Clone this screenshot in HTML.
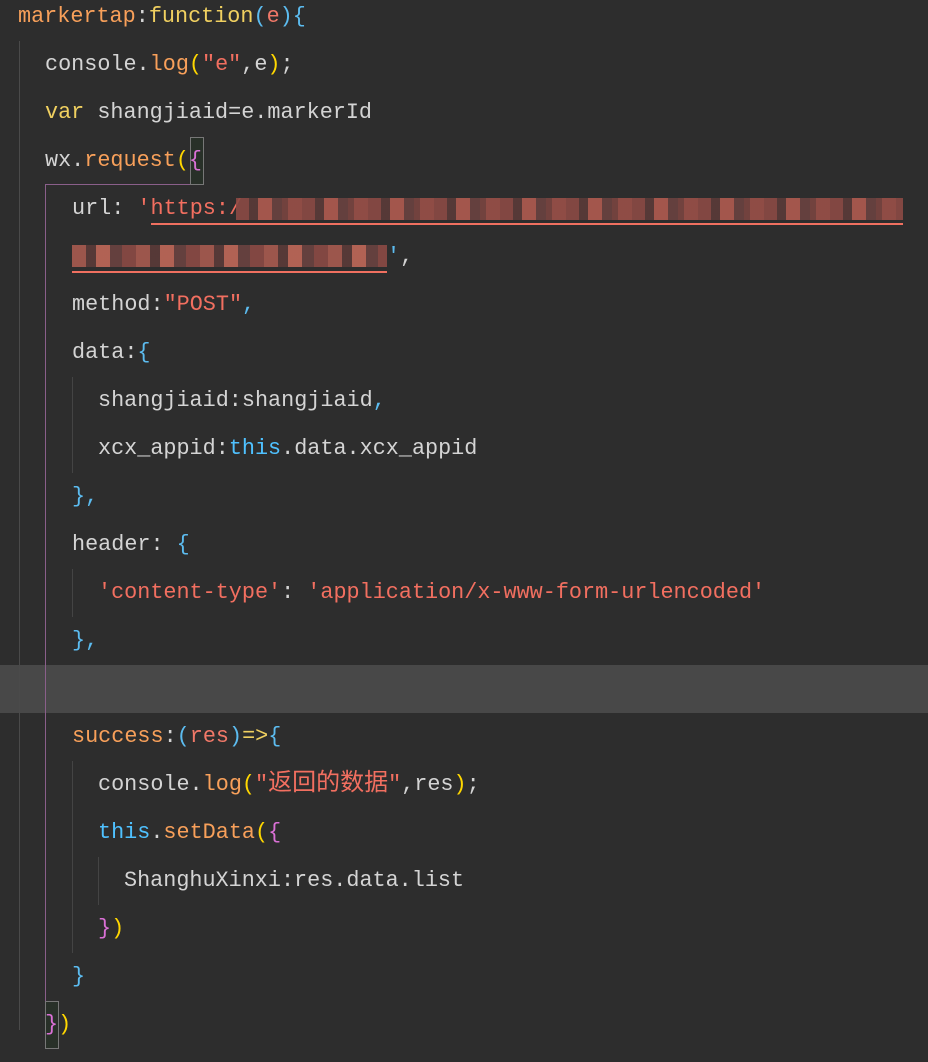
<!DOCTYPE html>
<html><head><meta charset="utf-8"><style>
html,body{margin:0;padding:0;}
body{width:928px;height:1062px;background:#2d2d2d;position:relative;overflow:hidden;font-family:"Liberation Mono","Noto Sans CJK SC",monospace;font-size:21.8px;color:#d4d4d4;}
.l{position:absolute;left:0;height:48px;line-height:48px;white-space:pre;}
.g{position:absolute;width:1px;background:#444;}
.o{color:#f8a05a}.y{color:#f0d060}.r{color:#f07868}.b{color:#5cbcf0}.s{color:#f26f60}.p{color:#ffd700}.m{color:#da70d6}.t{color:#4fc1ff}
.cj{font-size:24px;}
</style></head><body>
<div style="position:absolute;left:0;top:665px;width:928px;height:48px;background:#484848"></div>
<div class="g" style="left:19px;top:41px;height:989px;background:#4a4a4a"></div>
<div class="g" style="left:45px;top:184px;height:864px;background:#8a5f8a"></div>
<div style="position:absolute;left:45px;top:184px;width:145px;height:1px;background:#8a5f8a"></div>
<div class="g" style="left:72px;top:377px;height:96px"></div>
<div class="g" style="left:72px;top:569px;height:48px"></div>
<div class="g" style="left:72px;top:761px;height:192px"></div>
<div class="g" style="left:98px;top:857px;height:48px"></div>
<div style="position:absolute;left:190px;top:137px;width:12px;height:46px;border:1px solid #777;background:#283028"></div>
<div style="position:absolute;left:45px;top:1001px;width:12px;height:46px;border:1px solid #777;background:#283028"></div>

<div class="l" style="top:-7px;left:18px"><span class="o">markertap</span>:<span class="y">function</span><span class="b">(</span><span class="r">e</span><span class="b">){</span></div>
<div class="l" style="top:41px;left:45px">console.<span class="o">log</span><span class="p">(</span><span class="s">"e"</span>,e<span class="p">)</span>;</div>
<div class="l" style="top:89px;left:45px"><span class="y">var</span> shangjiaid=e.markerId</div>
<div class="l" style="top:137px;left:45px">wx.<span class="o">request</span><span class="p">(</span><span class="m">{</span></div>
<div class="l" style="top:185px;left:72px">url: <span class="s">'https:/</span></div>
<div style="position:absolute;left:236px;top:198px;width:667px;height:22px;background:repeating-linear-gradient(90deg,#8c4a44 0 13px,#5a3a38 13px 22px,#b05a50 22px 36px,#6a4240 36px 46px,#7a4440 46px 52px,#9a5048 52px 66px);opacity:.9"></div>
<div style="position:absolute;left:151px;top:223px;width:752px;height:2px;background:#f07060"></div>
<div style="position:absolute;left:72px;top:245px;width:315px;height:22px;background:repeating-linear-gradient(90deg,#a85a50 0 14px,#5a3a38 14px 24px,#c06858 24px 38px,#6a4240 38px 50px,#8c4a44 50px 64px);opacity:.9"></div>
<div class="l" style="top:233px;left:387px"><span class="b">'</span>,</div>
<div style="position:absolute;left:72px;top:271px;width:315px;height:2px;background:#f07060"></div>
<div class="l" style="top:281px;left:72px">method:<span class="s">"POST"</span><span class="b">,</span></div>
<div class="l" style="top:329px;left:72px">data:<span class="b">{</span></div>
<div class="l" style="top:377px;left:98px">shangjiaid:shangjiaid<span class="b">,</span></div>
<div class="l" style="top:425px;left:98px">xcx_appid:<span class="t">this</span>.data.xcx_appid</div>
<div class="l" style="top:473px;left:72px"><span class="b">},</span></div>
<div class="l" style="top:521px;left:72px">header: <span class="b">{</span></div>
<div class="l" style="top:569px;left:98px"><span class="s">'content-type'</span>: <span class="s">'application/x-www-form-urlencoded'</span></div>
<div class="l" style="top:617px;left:72px"><span class="b">},</span></div>
<div class="l" style="top:713px;left:72px"><span class="o">success</span>:<span class="b">(</span><span class="r">res</span><span class="b">)</span><span class="y">=&gt;</span><span class="b">{</span></div>
<div class="l" style="top:761px;left:98px">console.<span class="o">log</span><span class="p">(</span><span class="s">"<span class="cj">返回的数据</span>"</span>,res<span class="p">)</span>;</div>
<div class="l" style="top:809px;left:98px"><span class="t">this</span>.<span class="o">setData</span><span class="p">(</span><span class="m">{</span></div>
<div class="l" style="top:857px;left:124px">ShanghuXinxi:res.data.list</div>
<div class="l" style="top:905px;left:98px"><span class="m">}</span><span class="p">)</span></div>
<div class="l" style="top:953px;left:72px"><span class="b">}</span></div>
<div class="l" style="top:1001px;left:45px"><span class="m">}</span><span class="p">)</span></div>
</body></html>
